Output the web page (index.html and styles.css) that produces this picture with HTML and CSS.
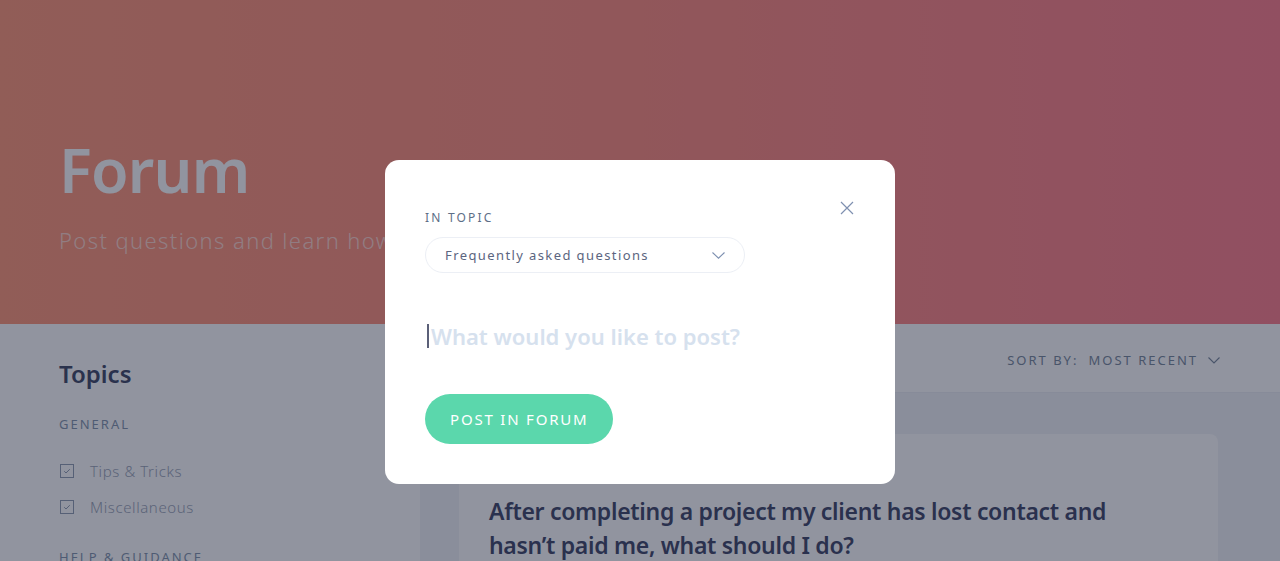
FILE: index.html
```html
<!DOCTYPE html>
<html lang="en">
<head>
<meta charset="utf-8">
<title>Forum</title>
<link rel="stylesheet" href="styles.css">
</head>
<body>
<div class="page">
  <header class="hero">
    <h1 class="hero-title">Forum</h1>
    <p class="hero-sub">Post questions and learn how to get the most out of your projects</p>
  </header>
  <div class="content">
    <aside class="sidebar">
      <h2 class="side-title">Topics</h2>
      <div class="side-group">GENERAL</div>
      <ul class="side-list">
        <li class="side-item"><span class="check"><svg viewBox="0 0 14 14" width="14" height="14"><rect x="0.5" y="0.5" width="13" height="13" fill="none" stroke="currentColor" stroke-width="1"/><path d="M4.2 7.2 L6 9 L9.8 5.2" fill="none" stroke="currentColor" stroke-width="1"/></svg></span>Tips &amp; Tricks</li>
        <li class="side-item"><span class="check"><svg viewBox="0 0 14 14" width="14" height="14"><rect x="0.5" y="0.5" width="13" height="13" fill="none" stroke="currentColor" stroke-width="1"/><path d="M4.2 7.2 L6 9 L9.8 5.2" fill="none" stroke="currentColor" stroke-width="1"/></svg></span>Miscellaneous</li>
      </ul>
      <div class="side-group side-group-2">HELP &amp; GUIDANCE</div>
    </aside>
    <main class="main">
      <div class="toolbar">
        <span class="sort-label">SORT BY:</span>
        <span class="sort-value">MOST RECENT</span>
        <svg class="chev" viewBox="0 0 12 7" width="12" height="7"><path d="M0.5 0.5 L6 6 L11.5 0.5" fill="none" stroke="currentColor" stroke-width="1.1"/></svg>
      </div>
      <div class="feed">
        <article class="card">
          <h3 class="card-title">After completing a project my client has lost contact and hasn’t paid me, what should I do?</h3>
        </article>
      </div>
    </main>
  </div>
</div>

<div class="overlay">
  <div class="modal">
    <button class="close" aria-label="Close"><svg viewBox="0 0 14 14" width="14" height="14"><path d="M1 1 L13 13 M13 1 L1 13" fill="none" stroke="currentColor" stroke-width="1.2"/></svg></button>
    <div class="label">IN TOPIC</div>
    <div class="select">
      <span class="select-text">Frequently asked questions</span>
      <svg class="select-chev" viewBox="0 0 13 7" width="13" height="7"><path d="M0.5 0.5 L6.5 6.2 L12.5 0.5" fill="none" stroke="currentColor" stroke-width="1.1"/></svg>
    </div>
    <div class="compose"><span class="caret"></span><span class="placeholder">What would you like to post?</span></div>
    <button class="post-btn">POST IN FORUM</button>
  </div>
</div>
</body>
</html>
```

FILE: styles.css
```css
* { box-sizing: border-box; }
html, body { margin: 0; padding: 0; }
body {
  width: 1280px;
  height: 561px;
  overflow: hidden;
  font-family: "Noto Sans", "Open Sans", sans-serif;
  background: #ffffff;
}
.page { width: 1280px; height: 561px; overflow: hidden; }

.hero {
  height: 324px;
  padding: 128px 59px 0;
  background: linear-gradient(90deg, #ff9676 0%, #ff8a7c 50%, #ff7c89 100%);
}
.hero-title {
  margin: 0;
  font-size: 61px;
  line-height: 84px;
  font-weight: 600;
  letter-spacing: -0.8px;
  color: #ffffff;
}
.hero-sub {
  margin: 13px 0 0;
  font-size: 22px;
  line-height: 30px;
  font-weight: 300;
  letter-spacing: 1.4px;
  color: rgba(255, 255, 255, 0.62);
  white-space: nowrap;
}

.content { display: flex; }
.sidebar {
  width: 420px;
  flex: none;
  padding: 35px 59px 0;
  background: #ffffff;
}
.side-title {
  margin: 0;
  font-size: 24px;
  line-height: 30px;
  font-weight: 600;
  color: #3b4462;
}
.side-group {
  margin-top: 26px;
  font-size: 13px;
  line-height: 18px;
  letter-spacing: 2px;
  color: #8193ab;
}
.side-group-2 { margin-top: 30px; }
.side-list { list-style: none; margin: 27px 0 0; padding: 0; display: flex; flex-direction: column; gap: 14px; }
.side-item {
  display: flex;
  align-items: center;
  gap: 16px;
  font-size: 15px;
  line-height: 22px;
  font-weight: 300;
  letter-spacing: 0.6px;
  color: #98a2b5;
}
.check { display: flex; padding-left: 1px; color: #8f9bb0; }

.main { flex: 1; background: #f1f3f7; min-height: 237px; }
.toolbar {
  height: 69px;
  background: #ffffff;
  border-bottom: 1px solid #eceef3;
  display: flex;
  align-items: center;
  justify-content: flex-end;
  padding: 4px 60px 0 0;
  font-size: 13px;
  letter-spacing: 2px;
  color: #768699;
}
.sort-label { margin-right: 10px; }
.sort-value { margin-right: 10px; }
.chev { color: #768699; margin-top: 1px; }

.feed { padding: 41px 62px 0 39px; }
.card {
  background: #ffffff;
  border-radius: 8px;
  padding: 60px 30px 30px;
  min-height: 200px;
}
.card-title {
  margin: 0;
  max-width: 640px;
  font-family: "Noto Sans", sans-serif;
  font-size: 23px;
  line-height: 34px;
  font-weight: 600;
  letter-spacing: -0.3px;
  color: #3b4264;
}

.overlay {
  position: fixed;
  inset: 0;
  background: rgba(26, 32, 54, 0.48);
  display: flex;
  justify-content: center;
  align-items: flex-start;
  padding-top: 160px;
}
.modal {
  position: relative;
  width: 510px;
  height: 324px;
  background: #ffffff;
  border-radius: 14px;
  padding: 50px 40px 40px;
  display: flex;
  flex-direction: column;
  align-items: flex-start;
}
.close {
  position: absolute;
  top: 41px;
  right: 41px;
  width: 14px;
  height: 14px;
  padding: 0;
  border: 0;
  background: none;
  color: #7f90b0;
  display: flex;
}
.label {
  font-size: 12px;
  line-height: 16px;
  letter-spacing: 2.2px;
  color: #5d6e87;
}
.select {
  margin-top: 11px;
  width: 320px;
  height: 36px;
  border: 1px solid #eceff5;
  border-radius: 18px;
  display: flex;
  align-items: center;
  justify-content: space-between;
  padding: 0 19px 0 19px;
}
.select-text {
  font-size: 13px;
  letter-spacing: 1.4px;
  color: #5b6580;
}
.select-chev { color: #7c8fb0; }
.compose {
  margin-top: 40px;
  height: 46px;
  display: flex;
  align-items: center;
  padding-left: 2px;
}
.caret {
  width: 2px;
  height: 24px;
  background: #5b6078;
  margin-right: 2px;
}
.placeholder {
  font-size: 22px;
  font-weight: 600;
  letter-spacing: 0;
  color: #d6e1ee;
}
.post-btn {
  margin-top: 35px;
  height: 50px;
  padding: 0 25px;
  border: 0;
  border-radius: 25px;
  background: #5bd7ac;
  color: #ffffff;
  font-family: "Noto Sans", sans-serif;
  font-size: 15px;
  letter-spacing: 1.8px;
  font-weight: 400;
}
```
